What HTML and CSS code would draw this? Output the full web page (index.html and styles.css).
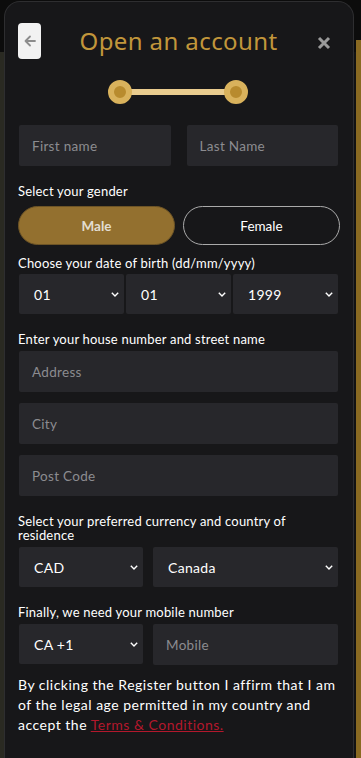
FILE: index.html
```html
<!DOCTYPE html>
<html lang="en">
<head>
<meta charset="utf-8">
<link rel="stylesheet" href="styles.css">
</head>
<body>
<div class="modal">
  <div class="header">
    <button class="back" aria-label="Back">
      <svg width="14" height="14" viewBox="0 0 14 14"><path d="M12 7H2.5M7 2.5L2.5 7L7 11.5" fill="none" stroke="#8c8c8c" stroke-width="1.8" stroke-linecap="round" stroke-linejoin="round"/></svg>
    </button>
    <h1 class="title">Open an account</h1>
    <button class="close" aria-label="Close">
      <svg width="14" height="14" viewBox="0 0 14 14"><path d="M2 2L12 12M12 2L2 12" fill="none" stroke="#9a9a9a" stroke-width="3"/></svg>
    </button>
  </div>
  <div class="steps">
    <span class="dot"></span><span class="bar"></span><span class="dot"></span>
  </div>

  <div class="row two">
    <div class="field"><span class="ph">First name</span></div>
    <div class="field"><span class="ph">Last Name</span></div>
  </div>

  <p class="label gender-label">Select your gender</p>
  <div class="gender">
    <div class="pill active">Male</div>
    <div class="pill">Female</div>
  </div>

  <p class="label dob-label">Choose your date of birth (dd/mm/yyyy)</p>
  <div class="row dob">
    <div class="field sel"><span>01</span><svg class="chev" width="8" height="5" viewBox="0 0 8 5"><path d="M0.8 0.8L4 4L7.2 0.8" fill="none" stroke="#fff" stroke-width="1.4"/></svg></div>
    <div class="field sel"><span>01</span><svg class="chev" width="8" height="5" viewBox="0 0 8 5"><path d="M0.8 0.8L4 4L7.2 0.8" fill="none" stroke="#fff" stroke-width="1.4"/></svg></div>
    <div class="field sel"><span>1999</span><svg class="chev" width="8" height="5" viewBox="0 0 8 5"><path d="M0.8 0.8L4 4L7.2 0.8" fill="none" stroke="#fff" stroke-width="1.4"/></svg></div>
  </div>

  <p class="label">Enter your house number and street name</p>
  <div class="stack">
    <div class="field"><span class="ph">Address</span></div>
    <div class="field"><span class="ph">City</span></div>
    <div class="field"><span class="ph">Post Code</span></div>
  </div>

  <p class="label">Select your preferred currency and country of residence</p>
  <div class="row split">
    <div class="field sel"><span>CAD</span><svg class="chev" width="8" height="5" viewBox="0 0 8 5"><path d="M0.8 0.8L4 4L7.2 0.8" fill="none" stroke="#fff" stroke-width="1.4"/></svg></div>
    <div class="field sel"><span>Canada</span><svg class="chev" width="8" height="5" viewBox="0 0 8 5"><path d="M0.8 0.8L4 4L7.2 0.8" fill="none" stroke="#fff" stroke-width="1.4"/></svg></div>
  </div>

  <p class="label">Finally, we need your mobile number</p>
  <div class="row split">
    <div class="field sel"><span>CA +1</span><svg class="chev" width="8" height="5" viewBox="0 0 8 5"><path d="M0.8 0.8L4 4L7.2 0.8" fill="none" stroke="#fff" stroke-width="1.4"/></svg></div>
    <div class="field"><span class="ph">Mobile</span></div>
  </div>

  <p class="terms">By clicking the Register button I affirm that I am of the legal age permitted in my country and accept the <a href="#">Terms &amp; Conditions.</a></p>
</div>
</body>
</html>
```
FILE: styles.css
```css
html, body {
  margin: 0;
  padding: 0;
  height: 100%;
}
body {
  background:
    linear-gradient(to right, transparent 356px, #8a6a22 356px) 0 40px / 100% 100% no-repeat,
    linear-gradient(to bottom, #0c0c0c 0, #0c0c0c 52px, transparent 52px),
    linear-gradient(to right, #2a2a22 0, #2a2a22 4px, transparent 4px),
    #121212;
  font-family: "Lato", "Open Sans", sans-serif;
  color: #fff;
  overflow: hidden;
}
.modal {
  box-sizing: border-box;
  margin: 1px 0 0 4px;
  width: 350px;
  min-height: 800px;
  background: #171719;
  border: 1px solid #2e2e30;
  border-bottom: none;
  border-radius: 16px 16px 0 0;
  padding: 21px 15px 0 14px;
}
.header {
  display: flex;
  align-items: center;
  height: 36px;
  margin-left: -1px;
}
.back {
  width: 23px;
  height: 36px;
  border: none;
  border-radius: 4px;
  background: #f2f2f2;
  padding: 0;
  display: flex;
  align-items: center;
  justify-content: center;
}
.title {
  flex: 1;
  margin: -2px 0 0 4px;
  text-align: center;
  font-family: "Noto Sans", sans-serif;
  font-weight: 400;
  font-size: 24px;
  color: #c1963b;
  letter-spacing: 0.4px;
}
.close {
  width: 24px;
  height: 24px;
  border: none;
  background: none;
  padding: 0;
  margin-right: 2px;
  margin-top: 4px;
  display: flex;
  align-items: center;
  justify-content: center;
}
.steps {
  display: flex;
  align-items: center;
  justify-content: center;
  margin: 21px 0 0 -1px;
  height: 24px;
}
.dot {
  width: 12px;
  height: 12px;
  border-radius: 50%;
  background: #b88b2e;
  border: 6px solid #d9b25c;
  position: relative;
  z-index: 1;
}
.bar {
  width: 96px;
  height: 6px;
  background: #e9cc8f;
  margin: 0 -2px;
}
.row {
  display: grid;
  gap: 16px;
}
.two {
  grid-template-columns: 1fr 1fr;
  margin-top: 21px;
}
.field {
  height: 41px;
  background: #27272b;
  border-radius: 2px;
  display: flex;
  align-items: center;
  padding: 0 13px;
  font-size: 13.5px;
  color: #fff;
}
.ph {
  color: #8c8c90;
  letter-spacing: 0.3px;
}
.label {
  margin: 18px 0 5px -1px;
  font-size: 13px;
  line-height: 14px;
  letter-spacing: 0.2px;
}
.gender-label {
  margin-bottom: 8px;
}
.dob-label {
  margin-top: 11px;
  margin-bottom: 4px;
}
.gender {
  display: grid;
  grid-template-columns: 1fr 1fr;
  gap: 8px;
  margin: 0 -2px 0 -1px;
}
.pill {
  height: 39px;
  box-sizing: border-box;
  border-radius: 20px;
  border: 1px solid #aaaaaa;
  display: flex;
  align-items: center;
  justify-content: center;
  font-size: 13.5px;
  color: #fff;
}
.pill.active {
  background: #93702f;
  border-color: #6d5426;
  color: #e2ddd2;
  font-weight: 700;
}
.sel {
  height: 40px;
  justify-content: space-between;
  padding: 0 5px 0 15px;
  font-size: 14px;
  letter-spacing: 0.3px;
}
.dob {
  grid-template-columns: 1fr 1fr 1fr;
  gap: 2px;
}
.stack {
  display: grid;
  gap: 11px;
}
.split {
  grid-template-columns: 124px 1fr;
  gap: 10px;
}
.terms {
  margin: 10px 0 0 -1px;
  font-size: 14px;
  line-height: 20px;
  letter-spacing: 0.5px;
}
.terms a {
  color: #b3182c;
}
```
